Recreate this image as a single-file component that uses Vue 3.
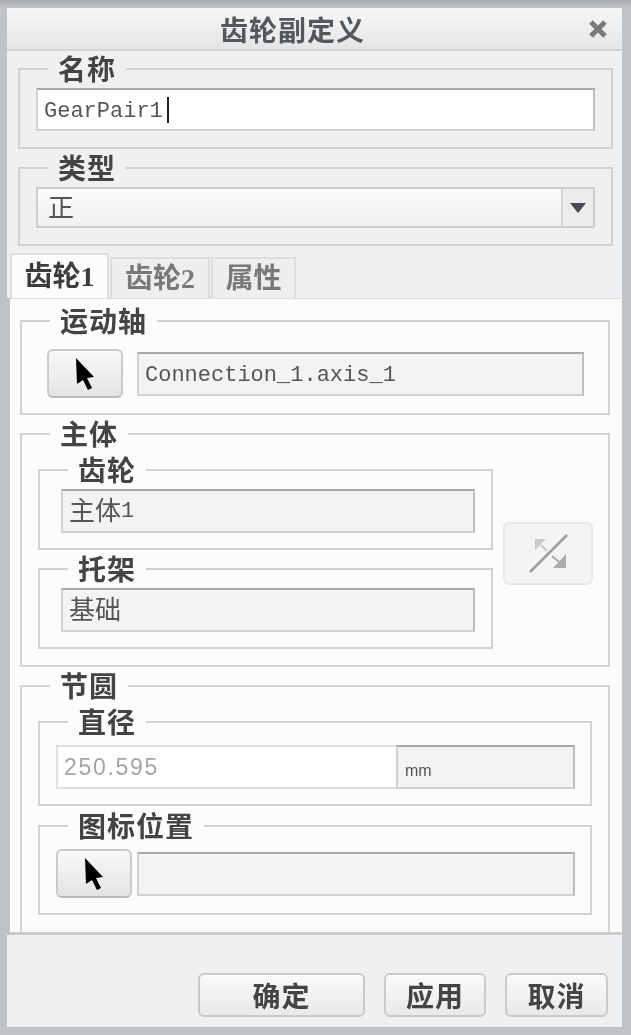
<script setup>
const tabs = [
  { key: 'gear1', label: '齿轮1', width: 99, active: true },
  { key: 'gear2', label: '齿轮2', width: 100 },
  { key: 'props', label: '属性', width: 85 },
]

const actions = [
  { key: 'ok', label: '确定', width: 167 },
  { key: 'apply', label: '应用', width: 102 },
  { key: 'cancel', label: '取消', width: 103 },
]
</script>

<template>
  <div class="window">
    <header class="titlebar">
      <span class="titlebar__text">齿轮副定义</span>
      <svg class="close" width="18" height="18" viewBox="0 0 18 18">
        <path d="M2 2 16 16M16 2 2 16" stroke="#77797b" stroke-width="5" fill="none" />
      </svg>
    </header>

    <section class="top">
      <div class="group group--name">
        <span class="legend">名称</span>
        <div class="field field--edit">
          <span class="mono">GearPair1</span><span class="caret"></span>
        </div>
      </div>
      <div class="group group--type">
        <span class="legend">类型</span>
        <div class="combo">
          <span class="combo__value">正</span>
          <span class="combo__btn"><i class="combo__arrow"></i></span>
        </div>
      </div>
    </section>

    <nav class="tabs">
      <button
        v-for="t in tabs"
        :key="t.key"
        class="tab"
        :class="{ 'tab--active': t.active }"
        :style="{ width: t.width + 'px' }"
      >
        {{ t.label }}
      </button>
    </nav>

    <main class="panel">
      <div class="group group--axis">
        <span class="legend">运动轴</span>
        <div class="pick-row">
          <button class="pick">
            <svg width="20" height="32" viewBox="0 0 20 32">
              <path d="M1 0 19 19 12 20 17 30 13 32 8 22 2 26Z" fill="#000" />
            </svg>
          </button>
          <div class="field field--ro field--axis"><span class="mono">Connection_1.axis_1</span></div>
        </div>
      </div>

      <div class="group group--body">
        <span class="legend">主体</span>
        <div class="body-row">
          <div class="body-col">
            <div class="group group--sub">
              <span class="legend">齿轮</span>
              <div class="field field--ro"><span class="cjk">主体</span><span class="mono mono--one">1</span></div>
            </div>
            <div class="group group--sub">
              <span class="legend">托架</span>
              <div class="field field--ro"><span class="cjk">基础</span></div>
            </div>
          </div>
          <button class="swap">
            <svg width="45" height="45" viewBox="0 0 45 45">
              <path d="M4 41 41 4" stroke="#9b9d9f" stroke-width="2.5" fill="none" />
              <path d="M9 8H20L9 19Z" fill="#c6c8ca" />
              <path d="M15 14 21 20" stroke="#c6c8ca" stroke-width="2" fill="none" />
              <path d="M40 37H27L40 23Z" fill="#a9abad" />
              <path d="M26 25 33 31" stroke="#a9abad" stroke-width="2" fill="none" />
            </svg>
          </button>
        </div>
      </div>

      <div class="group group--pitch">
        <span class="legend">节圆</span>
        <div class="group group--dia">
          <span class="legend">直径</span>
          <div class="dia-row">
            <div class="dia-input">250.595</div>
            <div class="dia-unit">mm</div>
          </div>
        </div>
        <div class="group group--pos">
          <span class="legend">图标位置</span>
          <div class="pos-row">
            <button class="pick">
              <svg width="20" height="32" viewBox="0 0 20 32">
                <path d="M1 0 19 19 12 20 17 30 13 32 8 22 2 26Z" fill="#000" />
              </svg>
            </button>
            <div class="field field--ro field--pos"></div>
          </div>
        </div>
      </div>
    </main>

    <footer class="footer">
      <button
        v-for="a in actions"
        :key="a.key"
        class="action"
        :style="{ width: a.width + 'px' }"
      >
        {{ a.label }}
      </button>
    </footer>
  </div>
</template>

<style scoped>
.window {
  width: 631px;
  height: 1035px;
  box-sizing: border-box;
  padding: 8px 9px 8px 7px;
  display: flex;
  flex-direction: column;
  background: linear-gradient(#a9adaf 0, #c0c3c5 8px);
  font-family: "Noto Sans CJK SC", sans-serif;
  color: #444;
  filter: blur(0.7px);
}
.titlebar {
  height: 43px;
  flex: none;
  box-sizing: border-box;
  display: flex;
  align-items: center;
  justify-content: space-between;
  padding: 0 15px 0 213px;
  background: linear-gradient(#f6f7f8, #e3e5e7);
  border-bottom: 2px solid #d2d4d6;
}
.titlebar__text {
  font-size: 28px;
  line-height: 40px;
  font-weight: 700;
  letter-spacing: 1px;
  color: #55585a;
}
.top {
  flex: none;
  height: 202px;
  box-sizing: border-box;
  padding: 17px 9px 0 11px;
  background: #eef0f2;
  display: flex;
  flex-direction: column;
  gap: 18px;
}
.group {
  position: relative;
  border: 2px solid #d0d2d4;
  box-sizing: border-box;
}
.legend {
  position: absolute;
  top: -16px;
  left: 28px;
  height: 28px;
  line-height: 28px;
  padding: 0 10px;
  font-size: 28px;
  font-weight: 700;
  letter-spacing: 1px;
  color: #444;
  background: #fcfcfc;
}
.top .legend {
  background: #eef0f2;
}
.group--name {
  height: 81px;
  padding: 18px 16px 0;
}
.group--type {
  height: 79px;
  padding: 18px 16px 0;
}
.field {
  height: 44px;
  box-sizing: border-box;
  display: flex;
  align-items: center;
  border: 2px solid #cfd1d3;
  border-top-color: #a6a8aa;
  padding-left: 6px;
}
.field--edit {
  height: 43px;
  background: #fff;
  border-right-color: #bcbec0;
}
.field--ro {
  background: #f3f3f3;
  border-right-color: #bcbec0;
}
.mono {
  margin-top: 4px;
  font-family: "Liberation Mono", monospace;
  font-size: 22px;
  color: #555;
}
.mono--one {
  margin-top: 0;
}
.cjk {
  margin-bottom: 4px;
  font-size: 26px;
  line-height: 32px;
  color: #555;
}
.caret {
  width: 2px;
  height: 26px;
  margin-left: 4px;
  background: #222;
}
.combo {
  height: 41px;
  box-sizing: border-box;
  display: flex;
  border: 2px solid #cbcdcf;
  background: linear-gradient(#fcfcfc, #eff0f1);
}
.combo__value {
  flex: 1;
  padding-left: 10px;
  font-size: 26px;
  line-height: 33px;
  color: #555;
}
.combo__btn {
  width: 30px;
  display: flex;
  align-items: center;
  justify-content: center;
  border-left: 2px solid #d4d6d8;
  background: #ebedef;
}
.combo__arrow {
  width: 0;
  height: 0;
  border-left: 8px solid transparent;
  border-right: 8px solid transparent;
  border-top: 10px solid #454a55;
}
.tabs {
  flex: none;
  height: 45px;
  box-sizing: border-box;
  padding-left: 3px;
  margin-bottom: -1px;
  display: flex;
  align-items: flex-start;
  gap: 1px;
  background: #eef0f2;
  position: relative;
  z-index: 1;
}
.tab {
  height: 41px;
  margin-top: 4px;
  padding: 0;
  box-sizing: border-box;
  border: 2px solid #dcdee0;
  border-bottom: 0;
  background: #eceef0;
  font: 700 28px/33px "Liberation Serif", "Noto Sans CJK SC", sans-serif;
  color: #77797b;
}
.tab--active {
  height: 45px;
  margin-top: 0;
  background: #fcfcfc;
  color: #3c3c3c;
  border-radius: 3px 3px 0 0;
  line-height: 37px;
}
.panel {
  flex: none;
  height: 638px;
  overflow: hidden;
  margin-left: 3px;
  padding: 21px 11px 0 10px;
  box-sizing: border-box;
  display: flex;
  flex-direction: column;
  gap: 18px;
  background: #fcfcfc;
  border-top: 2px solid #dcdee0;
  border-bottom: 3px solid #c8cacc;
  border-right: 1px solid #eef0f2;
}
.group--axis {
  height: 95px;
  flex: none;
  padding: 27px 24px 0 25px;
}
.pick-row,
.pos-row {
  display: flex;
  align-items: center;
}
.pick-row {
  gap: 14px;
}
.pos-row {
  gap: 5px;
}
.pick {
  flex: none;
  width: 76px;
  height: 49px;
  padding: 0;
  box-sizing: border-box;
  display: flex;
  align-items: center;
  justify-content: center;
  border: 2px solid #c8cacc;
  border-bottom-color: #b9bbbd;
  border-radius: 6px;
  background: linear-gradient(#f9f9f9, #e3e4e5);
}
.field--axis,
.field--pos {
  flex: 1;
}
.group--body {
  height: 234px;
  flex: none;
  padding: 34px 15px 0 16px;
}
.body-row {
  display: flex;
  gap: 10px;
}
.body-col {
  flex: 1;
  display: flex;
  flex-direction: column;
  gap: 18px;
}
.group--sub {
  height: 81px;
  padding: 18px 16px 0 21px;
}
.swap {
  flex: none;
  width: 90px;
  height: 63px;
  margin-top: 53px;
  padding: 0;
  display: flex;
  align-items: center;
  justify-content: center;
  box-sizing: border-box;
  border: 2px solid #e6e7e8;
  border-radius: 6px;
  background: #f3f4f5;
}
.group--pitch {
  flex: 1;
  min-height: 0;
  margin-bottom: -4px;
  padding: 34px 16px 0;
  display: flex;
  flex-direction: column;
  gap: 19px;
}
.group--dia {
  height: 85px;
  flex: none;
  padding: 22px 15px 0 16px;
}
.group--pos {
  height: 90px;
  flex: none;
  padding: 22px 15px 0 16px;
}
.dia-row {
  display: flex;
  height: 44px;
}
.dia-input {
  width: 340px;
  box-sizing: border-box;
  padding-left: 6px;
  line-height: 40px;
  border: 2px solid #e0e1e2;
  border-right: 0;
  background: #fff;
  font-family: "Liberation Sans", sans-serif;
  font-size: 23px;
  letter-spacing: 1.7px;
  color: #a3a5a7;
}
.dia-unit {
  flex: 1;
  box-sizing: border-box;
  padding-left: 7px;
  line-height: 48px;
  border: 2px solid #cfd1d3;
  border-top-color: #a6a8aa;
  border-right-color: #bcbec0;
  background: #f3f3f3;
  font-family: "Liberation Sans", sans-serif;
  font-size: 16px;
  color: #555;
}
.footer {
  flex: 1;
  min-height: 0;
  box-sizing: border-box;
  padding: 38px 14px 0 0;
  display: flex;
  justify-content: flex-end;
  align-items: flex-start;
  gap: 19px;
  background: #eef0f2;
}
.action {
  height: 44px;
  padding: 0;
  box-sizing: border-box;
  border: 2px solid #c8cacc;
  border-radius: 6px;
  background: linear-gradient(#fafafa, #e8e9ea);
  font: 700 28px/38px "Noto Sans CJK SC", sans-serif;
  letter-spacing: 1px;
  color: #444;
}
</style>
